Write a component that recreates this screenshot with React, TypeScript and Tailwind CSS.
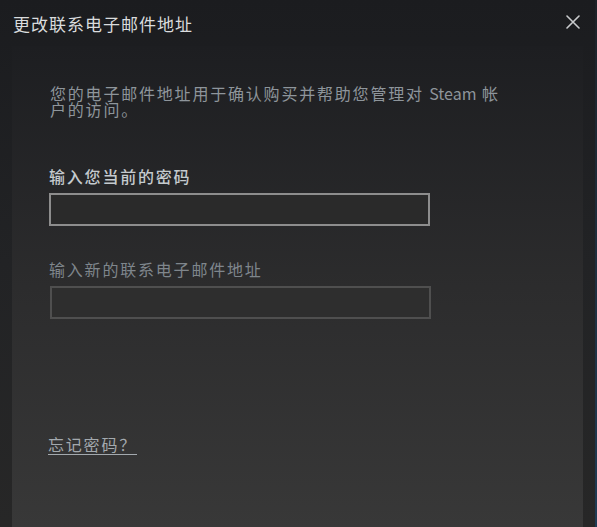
import React from 'react';

const font = { fontFamily: '"Noto Sans CJK SC", "Open Sans", sans-serif' };

const CloseIcon = () => (
  <svg width="14" height="14" viewBox="0 0 14 14" className="block">
    <path d="M1 1 L13 13 M13 1 L1 13" stroke="#c9cbcd" strokeWidth="1.6" strokeLinecap="round" />
  </svg>
);

export default function App() {
  return (
    <div
      className="w-[597px] h-[527px] flex flex-col overflow-hidden bg-gradient-to-b from-[#1b1c1f] via-[#222325] to-[#272727] relative"
      style={font}
    >
      {/* header */}
      <div className="h-[46px] shrink-0 flex items-center justify-between pl-[13px] pr-[17px]">
        <div className="text-[17px] leading-none tracking-[1px] text-[#dadcde]">更改联系电子邮件地址</div>
        <button className="p-0 -mt-[2px]">
          <CloseIcon />
        </button>
      </div>

      {/* body */}
      <div className="flex-1 flex pl-[12px] pr-[14px]">
        <div className="flex-1 bg-gradient-to-b from-[#1d1e21] via-[#2c2c2d] to-[#383838] pl-[38px] pt-[39px]">
          <p className="w-[462px] text-[16px] leading-[16px] tracking-[1.8px] text-[#8e959b]">
            您的电子邮件地址用于确认购买并帮助您管理对 <span className="tracking-normal">Steam</span> 帐户的访问。
          </p>

          <div className="mt-[50px] text-[16px] leading-[18px] tracking-[1.8px] font-medium text-[#c4cace] -ml-[1px]">
            输入您当前的密码
          </div>
          <div className="mt-[8px] w-[381px] h-[33px] -ml-[1px] border-2 border-[#8d8d8d] bg-[#2a2a2a]" />

          <div className="mt-[34px] text-[16px] leading-[18px] tracking-[1.8px] text-[#7f868c] -ml-[1px]">
            输入新的联系电子邮件地址
          </div>
          <div className="mt-[8px] w-[381px] h-[33px] border-2 border-[#4f4f4f] bg-[#2e2e2e]" />

          <a className="inline-block mt-[116px] -ml-[2px] text-[16px] leading-[18px] tracking-[1.8px] text-[#a3a9ae] underline underline-offset-[3px]">
            忘记密码？
          </a>
        </div>
      </div>

      <div className="absolute right-0 top-0 h-full w-[2px] bg-gradient-to-b from-[#1d2228] to-[#1f3c55]" />
    </div>
  );
}
